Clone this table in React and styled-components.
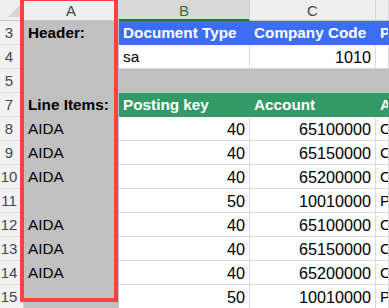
import React from 'react';
import styled, { createGlobalStyle } from 'styled-components';

const GlobalStyle = createGlobalStyle`
  html, body {
    margin: 0;
    padding: 0;
    background: #ffffff;
    overflow: hidden;
  }
`;

const fills = {
  blue: '#3d6df2',
  green: '#339966',
  gray: '#c0c0c0',
  none: '#ffffff',
};

const Sheet = styled.div`
  position: relative;
  width: 389px;
  height: 308px;
  overflow: hidden;
  display: grid;
  grid-template-columns: 24px 95px 131px 126px 1fr;
  grid-template-rows: 21px;
  grid-auto-rows: 24px;
  font-family: 'Liberation Sans', Arial, sans-serif;
  font-size: 15.3px;
  color: #000;
`;

const Corner = styled.div`
  background: #efefef;
  border-right: 1px solid #d4d4d4;
  border-bottom: 1px solid #c6c6c6;
  box-sizing: border-box;
  display: flex;
  align-items: flex-end;
  justify-content: flex-end;
  padding: 0 3px 3px 0;
`;

const ColHead = styled.div`
  box-sizing: border-box;
  background: ${p => (p.$active ? '#d9d9d9' : '#efefef')};
  color: ${p => (p.$active ? '#217346' : '#444')};
  border-right: 1px solid #d4d4d4;
  border-bottom: ${p => (p.$active ? '2px solid #217346' : '1px solid #c6c6c6')};
  display: flex;
  align-items: center;
  justify-content: center;
  font-size: 15px;
  padding-top: 1px;
`;

const RowHead = styled.div`
  box-sizing: border-box;
  background: #f2f2f2;
  color: #3d4656;
  border-right: 1px solid #d4d4d4;
  border-bottom: 1px solid #dedede;
  display: flex;
  align-items: center;
  justify-content: center;
  padding-right: 5px;
  font-size: 15px;
`;

const Cell = styled.div`
  box-sizing: border-box;
  background: ${p => fills[p.$fill || 'none']};
  border-right: 1px solid ${p => (p.$fill ? fills[p.$fill] : '#d9d9d9')};
  border-bottom: 1px solid ${p => (p.$fill ? fills[p.$fill] : '#d9d9d9')};
  color: ${p => (p.$fill === 'blue' || p.$fill === 'green' ? '#fff' : '#000')};
  font-weight: ${p => (p.$bold ? 700 : 400)};
  font-size: ${p => (p.$num ? '16.2px' : '15.3px')};
  display: flex;
  align-items: center;
  justify-content: ${p => (p.$num ? 'flex-end' : 'flex-start')};
  padding: 1px 4px 0 4px;
  white-space: nowrap;
  overflow: hidden;
`;

const Highlight = styled.div`
  position: absolute;
  left: 20px;
  top: -3px;
  width: 98px;
  height: 305px;
  box-sizing: border-box;
  border: 4px solid #f44345;
  pointer-events: none;
`;

const SelectAll = () => (
  <svg width="12" height="12" viewBox="0 0 12 12">
    <polygon points="0,12 12,12 12,0" fill="#d6d6d6" />
  </svg>
);

// column A label, B, C, D (clipped at the window edge)
const lineItems = [
  ['AIDA', '40', '65100000', 'Office supplies'],
  ['AIDA', '40', '65150000', 'Consulting'],
  ['AIDA', '40', '65200000', 'Other expenses'],
  ['', '50', '10010000', 'Payables'],
  ['AIDA', '40', '65100000', 'Office supplies'],
  ['AIDA', '40', '65150000', 'Consulting'],
  ['AIDA', '40', '65200000', 'Other expenses'],
  ['', '50', '10010000', 'Payables'],
];

export default function App() {
  return (
    <>
      <GlobalStyle />
      <Sheet>
        <Corner><SelectAll /></Corner>
        <ColHead>A</ColHead>
        <ColHead $active>B</ColHead>
        <ColHead>C</ColHead>
        <ColHead />

        <RowHead>3</RowHead>
        <Cell $fill="gray" $bold>Header:</Cell>
        <Cell $fill="blue" $bold>Document Type</Cell>
        <Cell $fill="blue" $bold>Company Code</Cell>
        <Cell $fill="blue" $bold>Posting Date</Cell>

        <RowHead>4</RowHead>
        <Cell $fill="gray" />
        <Cell>sa</Cell>
        <Cell $num>1010</Cell>
        <Cell />

        <RowHead>5</RowHead>
        <Cell $fill="gray" />
        <Cell $fill="gray" />
        <Cell $fill="gray" />
        <Cell $fill="gray" />

        <RowHead>7</RowHead>
        <Cell $fill="gray" $bold>Line Items:</Cell>
        <Cell $fill="green" $bold>Posting key</Cell>
        <Cell $fill="green" $bold>Account</Cell>
        <Cell $fill="green" $bold>Amount</Cell>

        {lineItems.map(([label, key, account, text], i) => (
          <React.Fragment key={i}>
            <RowHead>{8 + i}</RowHead>
            <Cell $fill="gray">{label}</Cell>
            <Cell $num>{key}</Cell>
            <Cell $num>{account}</Cell>
            <Cell>{text}</Cell>
          </React.Fragment>
        ))}

        <Highlight />
      </Sheet>
    </>
  );
}
